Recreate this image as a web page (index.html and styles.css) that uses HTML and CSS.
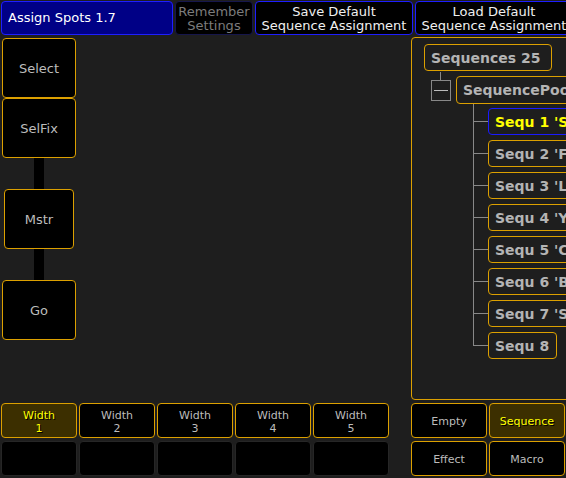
FILE: index.html
```html
<!DOCTYPE html>
<html>
<head>
<meta charset="utf-8">
<link rel="stylesheet" href="styles.css">
</head>
<body>
<div class="screen">
  <div class="topbar">
    <div class="tb title">Assign Spots 1.7</div>
    <div class="tb dim">Remember<br>Settings</div>
    <div class="tb act">Save Default<br>Sequence Assignment</div>
    <div class="tb act">Load Default<br>Sequence Assignment</div>
  </div>
  <div class="main">
    <div class="left">
      <div class="col">
        <div class="btn big">Select</div>
        <div class="btn big">SelFix</div>
        <div class="track"></div>
        <div class="btn big mstr">Mstr</div>
        <div class="track"></div>
        <div class="btn big">Go</div>
      </div>
    </div>
    <div class="panel">
      <div class="tree">
        <div class="node root">Sequences 25</div>
        <div class="poolrow">
          <div class="collapse"></div>
          <div class="node pool">SequencePool</div>
        </div>
        <div class="children">
          <div class="leaf"><div class="node item sel">Sequ 1 'Spots 1'</div></div>
          <div class="leaf"><div class="node item">Sequ 2 'Front'</div></div>
          <div class="leaf"><div class="node item">Sequ 3 'LED'</div></div>
          <div class="leaf"><div class="node item">Sequ 4 'Yoke'</div></div>
          <div class="leaf"><div class="node item">Sequ 5 'Color'</div></div>
          <div class="leaf"><div class="node item">Sequ 6 'Beam'</div></div>
          <div class="leaf"><div class="node item">Sequ 7 'Spots 2'</div></div>
          <div class="leaf last"><div class="node item short">Sequ 8</div></div>
        </div>
      </div>
    </div>
  </div>
  <div class="bottom">
    <div class="grid5">
      <div class="btn sm on">Width<br>1</div>
      <div class="btn sm">Width<br>2</div>
      <div class="btn sm">Width<br>3</div>
      <div class="btn sm">Width<br>4</div>
      <div class="btn sm">Width<br>5</div>
      <div class="blank"></div>
      <div class="blank"></div>
      <div class="blank"></div>
      <div class="blank"></div>
      <div class="blank"></div>
    </div>
    <div class="grid2">
      <div class="btn sm">Empty</div>
      <div class="btn sm on">Sequence</div>
      <div class="btn sm">Effect</div>
      <div class="btn sm">Macro</div>
    </div>
  </div>
</div>
</body>
</html>
```
FILE: styles.css
```css
* { box-sizing: border-box; }
html, body {
  margin: 0;
  padding: 0;
  background: #1e1e1e;
}
body {
  width: 566px;
  height: 478px;
  overflow: hidden;
  font-family: "DejaVu Sans", sans-serif;
}
.screen {
  width: 566px;
  height: 478px;
  overflow: hidden;
}
.topbar {
  display: flex;
  gap: 2px;
  height: 36px;
  padding: 1px 0 0 1px;
}
.tb {
  flex-shrink: 0;
  height: 34px;
  border-radius: 4px;
  font-size: 13px;
  line-height: 14px;
  padding-top: 2px;
  display: flex;
  align-items: center;
  justify-content: center;
  text-align: center;
  background: #000;
  color: #f0f0f0;
  border: 1px solid #1e1eff;
}
.title {
  width: 172px;
  justify-content: flex-start;
  padding: 0 0 0 6px;
  background: #000086;
  color: #ffffff;
}
.dim {
  width: 78px;
  color: #7c7c7c;
  border-color: #16164c;
}
.act {
  width: 158px;
}
.main {
  display: flex;
  height: 364px;
}
.left {
  width: 411px;
  flex-shrink: 0;
  padding: 2px 0 0 2px;
}
.col {
  width: 74px;
  display: flex;
  flex-direction: column;
  align-items: center;
}
.btn {
  background: #000;
  border: 1px solid #dca000;
  border-radius: 4px;
  color: #bcbcbc;
  display: flex;
  align-items: center;
  justify-content: center;
  text-align: center;
}
.big {
  width: 74px;
  height: 60px;
  font-size: 13px;
}
.mstr {
  width: 70px;
}
.track {
  width: 10px;
  height: 31px;
  background: #000;
}
.panel {
  flex-shrink: 0;
  width: 170px;
  height: 363px;
  margin-top: 1px;
  border: 1px solid #dca000;
  border-radius: 4px;
  overflow: hidden;
}
.tree {
  padding: 6px 0 0 12px;
}
.node {
  height: 27px;
  border: 1px solid #dca000;
  border-radius: 4px;
  font-size: 14px;
  font-weight: bold;
  color: #b4b4b4;
  display: flex;
  align-items: center;
  padding-left: 6px;
  white-space: nowrap;
  overflow: hidden;
}
.root {
  width: 128px;
}
.poolrow {
  display: flex;
  align-items: center;
  margin-top: 5px;
  margin-left: 7px;
  gap: 5px;
}
.collapse {
  position: relative;
  width: 20px;
  height: 21px;
  border: 1px solid #888;
  flex-shrink: 0;
}
.collapse::before {
  content: "";
  position: absolute;
  left: 8px;
  top: -9px;
  width: 1px;
  height: 8px;
  background: #888;
}
.collapse::after {
  content: "";
  position: absolute;
  left: 2px;
  right: 2px;
  top: 9px;
  height: 1px;
  background: #bbb;
}
.pool {
  height: 28px;
  width: 130px;
  flex-shrink: 0;
}
.children {
  margin-left: 49px;
}
.leaf {
  position: relative;
  height: 32px;
  padding: 4px 0 0 15px;
}
.leaf::before {
  content: "";
  position: absolute;
  left: 0;
  top: 0;
  width: 1px;
  height: 32px;
  background: #888;
}
.leaf.last::before {
  height: 18px;
}
.leaf::after {
  content: "";
  position: absolute;
  left: 0;
  top: 17px;
  width: 15px;
  height: 1px;
  background: #888;
}
.item {
  width: 120px;
}
.item.short {
  width: 69px;
}
.item.sel {
  border-color: #1a1aff;
  color: #ffff00;
}
.bottom {
  display: flex;
  margin-top: 3px;
  padding-left: 1px;
}
.grid5 {
  display: grid;
  grid-template-columns: repeat(5, 76px);
  grid-template-rows: 35px 35px;
  column-gap: 2px;
  row-gap: 3px;
}
.grid2 {
  display: grid;
  grid-template-columns: repeat(2, 76px);
  grid-template-rows: 35px 35px;
  column-gap: 2px;
  row-gap: 3px;
  margin-left: 22px;
}
.sm {
  font-size: 11px;
  line-height: 13px;
  padding-top: 2px;
}
.on {
  background: #3c2f00;
  color: #ffff00;
  text-shadow: 1px 1px 0 #000;
}
.blank {
  background: #000;
  border: 1px solid #262626;
  border-radius: 4px;
}
```
